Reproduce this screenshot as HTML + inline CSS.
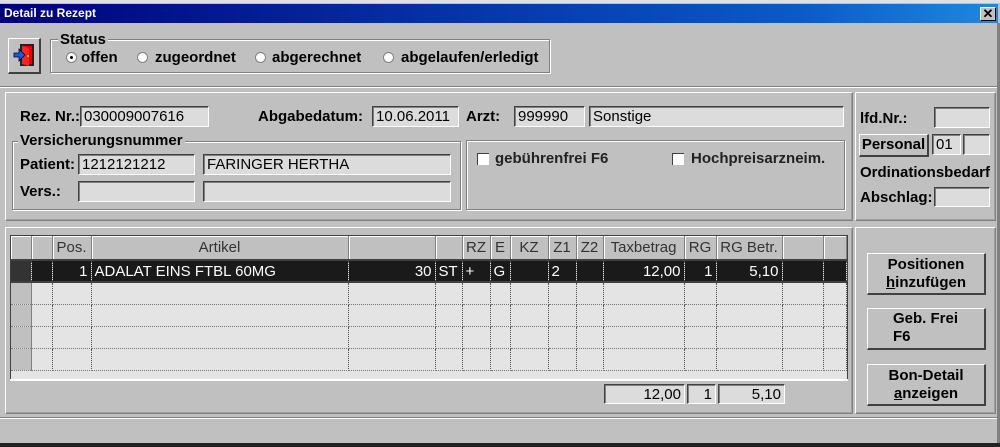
<!DOCTYPE html>
<html><head><meta charset="utf-8"><style>
*{box-sizing:border-box;margin:0;padding:0}
body{width:1000px;height:447px;background:#c0c0c0;font-family:"Liberation Sans",Arial,sans-serif;font-size:15px;color:#000;position:relative;overflow:hidden}
.a{position:absolute}
.t{position:absolute;white-space:nowrap;font-size:15px}
.b{font-weight:bold}
.in{position:absolute;background:#dcdcdc;border-top:1px solid #404040;border-left:1px solid #404040;border-bottom:1px solid #fff;border-right:1px solid #fff;box-shadow:inset 1px 1px 0 #808080;font-size:15px;padding:0 3px;white-space:nowrap;line-height:19px}
.grp{position:absolute;border:1px solid #808080;box-shadow:1px 1px 0 #fff,inset 1px 1px 0 #fff}
.pan{position:absolute;border-top:1px solid #fff;border-left:1px solid #fff;border-right:1px solid #808080;border-bottom:1px solid #808080;box-shadow:inset -1px -1px 0 #a0a0a0}
.btn{position:absolute;background:#c0c0c0;border-top:1px solid #fff;border-left:1px solid #fff;border-right:2px solid #404040;border-bottom:2px solid #404040;font-weight:bold;font-size:15px;text-align:center;line-height:18px}
.lg{position:absolute;background:#c0c0c0;padding:0 2px;font-weight:bold;font-size:15px;line-height:15px}
.rad{position:absolute;width:11px;height:11px;border-radius:50%;background:#fff;border:1px solid #808080}
.chk{position:absolute;width:12px;height:12px;background:#fff;border-top:1px solid #404040;border-left:1px solid #404040}
table{border-collapse:collapse;position:absolute;left:11px;top:236px;table-layout:fixed}
td{border-right:1px dotted #555;border-bottom:1px dotted #777;height:22px;font-size:15px;padding:0 3px;white-space:nowrap;background:#e4e4e4;overflow:hidden}
tr.h td{background:#c0c0c0;color:#333;border-right:1px solid #808080;border-bottom:2px solid #404040;box-shadow:inset 1px 1px 0 #fff;height:24px;text-align:center;padding:0 1px}
tr.s td{background:#1a1a1a;color:#fff;height:22px;border-bottom:2px solid #404040}
td.rh{background:#c0c0c0;border-right:1px solid #808080}
.r{text-align:right}
</style></head><body>
<div class="a" style="left:0;top:0;width:1000px;height:3px;background:#e0e0e0"></div>
<div class="a" style="left:0;top:4px;width:998px;height:19px;background:linear-gradient(90deg,#00007e,#0a5ac8 80%,#1e88e0)"></div>
<div class="t b" style="left:4px;top:6px;color:#fff;font-size:12px">Detail zu Rezept</div>
<div class="a" style="left:980px;top:7px;width:16px;height:14px;background:#c0c0c0;border-top:1px solid #fff;border-left:1px solid #fff;border-right:1px solid #000;border-bottom:1px solid #000;font-weight:bold;font-size:13px;line-height:12px;text-align:center">✕</div>
<div class="a" style="left:997px;top:23px;width:3px;height:424px;background:#808080"></div>
<div class="a" style="left:0;top:443px;width:1000px;height:4px;background:#222"></div>

<div class="btn" style="left:8px;top:38px;width:33px;height:36px"></div>
<svg class="a" style="left:12px;top:42px" width="26" height="28"><rect x="8" y="2" width="14" height="22" fill="#222"/><rect x="10" y="4" width="10" height="18" fill="#e00"/><polygon points="10,4 17,6 17,24 10,22" fill="#f22"/><circle cx="16" cy="14" r="1" fill="#fd0"/><polygon points="2,11 7,11 7,7 13,13 7,19 7,15 2,15" fill="#1060e0" stroke="#003" stroke-width=".8"/></svg>

<div class="grp" style="left:50px;top:39px;width:500px;height:34px"></div>
<div class="lg" style="left:58px;top:32px">Status</div>
<div class="rad" style="left:66px;top:52px"><div class="a" style="left:3px;top:3px;width:3px;height:3px;background:#000;border-radius:50%"></div></div>
<div class="t b" style="left:81px;top:49px">offen</div>
<div class="rad" style="left:137px;top:52px"></div><div class="t b" style="left:155px;top:49px">zugeordnet</div>
<div class="rad" style="left:255px;top:52px"></div><div class="t b" style="left:272px;top:49px">abgerechnet</div>
<div class="rad" style="left:383px;top:52px"></div><div class="t b" style="left:401px;top:49px">abgelaufen/erledigt</div>

<div class="a" style="left:0;top:86px;width:997px;height:2px;border-top:1px solid #808080;border-bottom:1px solid #fff"></div>

<div class="pan" style="left:5px;top:92px;width:848px;height:129px"></div>
<div class="pan" style="left:855px;top:92px;width:141px;height:129px"></div>
<div class="t b" style="left:20px;top:108px">Rez. Nr.:</div>
<div class="in" style="left:80px;top:106px;width:129px;height:21px">030009007616</div>
<div class="t b" style="left:258px;top:108px">Abgabedatum:</div>
<div class="in" style="left:372px;top:106px;width:87px;height:21px">10.06.2011</div>
<div class="t b" style="left:466px;top:108px">Arzt:</div>
<div class="in" style="left:514px;top:106px;width:71px;height:21px">999990</div>
<div class="in" style="left:589px;top:106px;width:255px;height:21px">Sonstige</div>

<div class="grp" style="left:12px;top:141px;width:449px;height:69px"></div>
<div class="lg" style="left:18px;top:133px">Versicherungsnummer</div>
<div class="t b" style="left:20px;top:156px">Patient:</div>
<div class="in" style="left:78px;top:154px;width:117px;height:21px">1212121212</div>
<div class="in" style="left:203px;top:154px;width:248px;height:21px">FARINGER HERTHA</div>
<div class="t b" style="left:20px;top:183px">Vers.:</div>
<div class="in" style="left:78px;top:181px;width:117px;height:21px"></div>
<div class="in" style="left:203px;top:181px;width:248px;height:21px"></div>

<div class="grp" style="left:466px;top:140px;width:379px;height:70px"></div>
<div class="chk" style="left:477px;top:153px"></div><div class="t b" style="left:495px;top:150px;color:#222">gebührenfrei F6</div>
<div class="chk" style="left:672px;top:153px"></div><div class="t b" style="left:691px;top:150px;color:#222">Hochpreisarzneim.</div>

<div class="t b" style="left:860px;top:110px">lfd.Nr.:</div>
<div class="in" style="left:934px;top:107px;width:56px;height:21px"></div>
<div class="btn" style="left:859px;top:134px;width:70px;height:23px;line-height:20px">Personal</div>
<div class="in" style="left:932px;top:134px;width:29px;height:21px">01</div>
<div class="in" style="left:963px;top:134px;width:27px;height:21px"></div>
<div class="t b" style="left:860px;top:164px">Ordinationsbedarf</div>
<div class="t b" style="left:860px;top:189px">Abschlag:</div>
<div class="in" style="left:934px;top:187px;width:56px;height:20px"></div>

<div class="pan" style="left:5px;top:227px;width:848px;height:187px"></div>
<div class="pan" style="left:855px;top:227px;width:141px;height:187px"></div>
<div class="a" style="left:10px;top:235px;width:838px;height:145px;background:#e4e4e4;border:1px solid #404040;border-bottom:1px solid #fff"></div>
<table>
<colgroup><col style="width:20px"><col style="width:21px"><col style="width:39px"><col style="width:257px"><col style="width:87px"><col style="width:27px"><col style="width:28px"><col style="width:20px"><col style="width:38px"><col style="width:28px"><col style="width:27px"><col style="width:81px"><col style="width:32px"><col style="width:66px"><col style="width:41px"><col style="width:23px"></colgroup>
<tr class="h"><td></td><td></td><td>Pos.</td><td>Artikel</td><td></td><td></td><td>RZ</td><td>E</td><td>KZ</td><td>Z1</td><td>Z2</td><td>Taxbetrag</td><td>RG</td><td>RG Betr.</td><td></td><td></td></tr>
<tr class="s"><td style="background:#333"></td><td></td><td class="r">1</td><td>ADALAT EINS FTBL 60MG</td><td class="r">30</td><td>ST</td><td>+</td><td>G</td><td></td><td>2</td><td></td><td class="r">12,00</td><td class="r">1</td><td class="r">5,10</td><td></td><td></td></tr>
<tr><td class="rh"></td><td></td><td></td><td></td><td></td><td></td><td></td><td></td><td></td><td></td><td></td><td></td><td></td><td></td><td></td><td></td></tr>
<tr><td class="rh"></td><td></td><td></td><td></td><td></td><td></td><td></td><td></td><td></td><td></td><td></td><td></td><td></td><td></td><td></td><td></td></tr>
<tr><td class="rh"></td><td></td><td></td><td></td><td></td><td></td><td></td><td></td><td></td><td></td><td></td><td></td><td></td><td></td><td></td><td></td></tr>
<tr><td class="rh"></td><td></td><td></td><td></td><td></td><td></td><td></td><td></td><td></td><td></td><td></td><td></td><td></td><td></td><td></td><td></td></tr>
</table>
<div class="a" style="left:10px;top:379px;width:838px;height:2px;background:#fff"></div>
<div class="in r" style="left:604px;top:384px;width:81px;height:20px;text-align:right">12,00</div>
<div class="in" style="left:687px;top:384px;width:29px;height:20px;text-align:right">1</div>
<div class="in" style="left:718px;top:384px;width:67px;height:20px;text-align:right">5,10</div>

<div class="btn" style="left:867px;top:253px;width:119px;height:42px;padding-top:2px">Positionen<br><u>h</u>inzufügen</div>
<div class="btn" style="left:867px;top:308px;width:119px;height:42px;padding-top:1px;text-align:left;padding-left:25px">Geb. Frei<br>F6</div>
<div class="btn" style="left:867px;top:364px;width:119px;height:42px;padding-top:2px">Bon-Detail<br><u>a</u>nzeigen</div>
<div class="a" style="left:0;top:417px;width:997px;height:2px;border-top:1px solid #808080;border-bottom:1px solid #fff"></div>
</body></html>
